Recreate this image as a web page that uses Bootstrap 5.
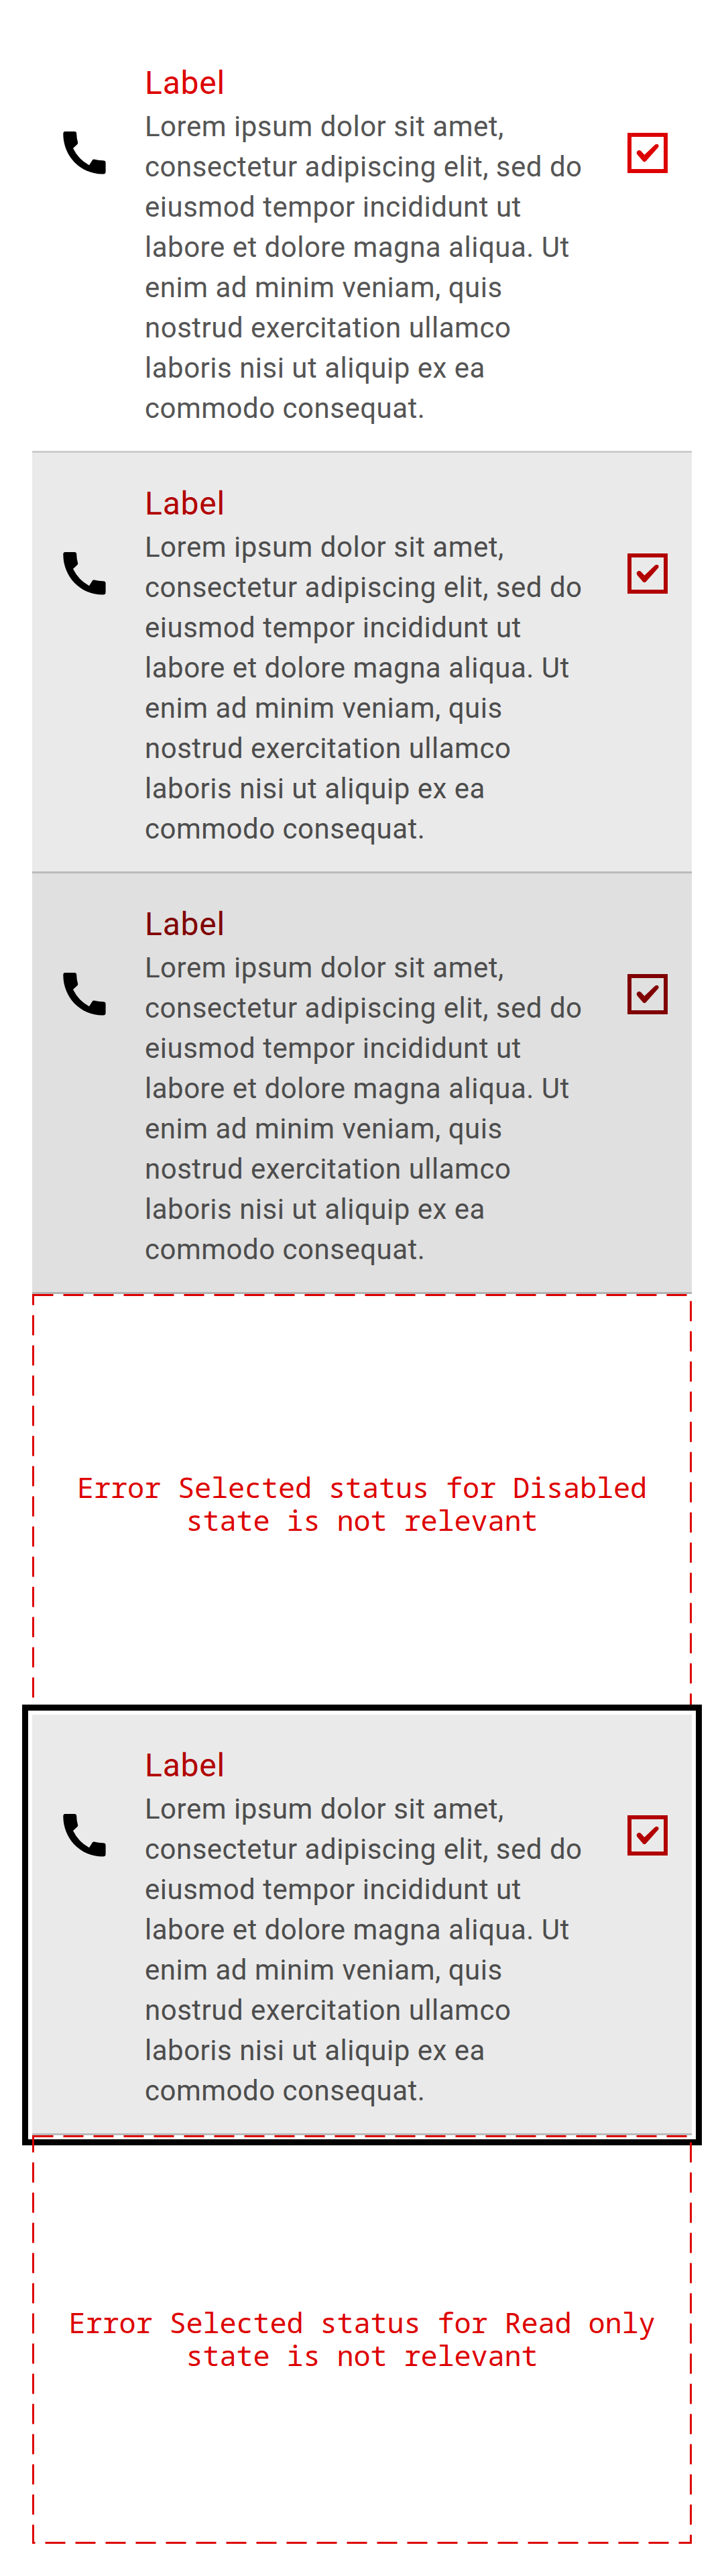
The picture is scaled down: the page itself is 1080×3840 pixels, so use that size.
<!DOCTYPE html>
<html lang="en">
<head>
<meta charset="utf-8">
<meta name="viewport" content="width=device-width, initial-scale=1">
<title>List item – error selected states</title>
<link href="https://cdn.jsdelivr.net/npm/bootstrap@5.3.0/dist/css/bootstrap.min.css" rel="stylesheet">
<style>
body { background: #fff; font-family: Roboto, sans-serif; --err: #d00; }
.states { width: 1080px; padding: 48px; }
.state-item { height: 627px; padding: 40px 36px 0 30px; border-bottom: 3px solid #ccc; }
.state-item .call-icon { width: 96px; height: 96px; margin-top: 92px; flex: none; }
.item-copy { width: 666px; margin-left: 42px; flex: none; }
.item-label { font-size: 48px; line-height: 71px; letter-spacing: .8px; color: var(--err); margin: 0; font-weight: 400; }
.item-text { font-size: 42px; line-height: 60px; letter-spacing: .5px; color: #555; margin: 0; }
.check-box { width: 60px; height: 60px; margin-top: 110px; color: var(--err); flex: none; }
.is-hover { --err: #b20000; background: #eaeaea; border-color: #bbb; }
.is-hover .item-text, .is-pressed .item-text { color: #4d4d4d; }
.is-pressed { --err: #800000; background: #e0e0e0; border-color: #b3b3b3; }
.is-focus { box-shadow: 0 0 0 6px #fff, 0 0 0 15px #000; }
.state-note { height: 627px; padding-bottom: 4px; color: #d00; }
.state-note.last-note { height: 609px; }
.state-note p { font: 42px/49px "Droid Sans Mono", "Noto Sans Mono", "DejaVu Sans Mono", monospace; letter-spacing: -.2px; margin: 0; }
</style>
<script src="https://cdn.jsdelivr.net/npm/bootstrap@5.3.0/dist/js/bootstrap.bundle.min.js"></script>
</head>
<body>
<svg class="d-none">
  <symbol id="call" viewBox="0 0 96 96"><path d="M19 16H33q3.200 0 3.200 3 0 7 2 13.500.3 1.500-1 2.700L31 41q8 16.500 24 25.300l4.600-7.300q1.200-1.800 3-1.400 6 1.600 13 1.600 4 0 4 3.300V76q0 3.500-4 3.500C41 79.500 16.300 52 16.300 19.500Q16.300 16 19 16z"/></symbol>
  <symbol id="check" viewBox="0 0 60 60"><path d="M3 3h54v54H3z" fill="none" stroke="currentColor" stroke-width="6"/><path d="M14.700 27.300Q17.300 24.800 20.300 27.200L25.300 32.700L41.300 17.400Q43.800 15.900 45.900 17.500Q47.300 19.400 45.800 21.800L27.500 42.200Q25.300 44.200 23.100 42.200L14.500 32.200Q12.700 29.600 14.700 27.300z" fill="currentColor"/></symbol>
</svg>
<main class="states d-flex flex-column">
  <section class="state-item d-flex align-items-start">
    <svg class="call-icon"><use href="#call"/></svg>
    <div class="item-copy"><h2 class="item-label">Label</h2><p class="item-text">Lorem ipsum dolor sit amet, consectetur adipiscing elit, sed do eiusmod tempor incididunt ut labore et dolore magna aliqua. Ut enim ad minim veniam, quis nostrud exercitation ullamco laboris nisi ut aliquip ex ea commodo consequat.</p></div>
    <svg class="check-box ms-auto"><use href="#check"/></svg>
  </section>
  <section class="state-item is-hover d-flex align-items-start">
    <svg class="call-icon"><use href="#call"/></svg>
    <div class="item-copy"><h2 class="item-label">Label</h2><p class="item-text">Lorem ipsum dolor sit amet, consectetur adipiscing elit, sed do eiusmod tempor incididunt ut labore et dolore magna aliqua. Ut enim ad minim veniam, quis nostrud exercitation ullamco laboris nisi ut aliquip ex ea commodo consequat.</p></div>
    <svg class="check-box ms-auto"><use href="#check"/></svg>
  </section>
  <section class="state-item is-pressed d-flex align-items-start">
    <svg class="call-icon"><use href="#call"/></svg>
    <div class="item-copy"><h2 class="item-label">Label</h2><p class="item-text">Lorem ipsum dolor sit amet, consectetur adipiscing elit, sed do eiusmod tempor incididunt ut labore et dolore magna aliqua. Ut enim ad minim veniam, quis nostrud exercitation ullamco laboris nisi ut aliquip ex ea commodo consequat.</p></div>
    <svg class="check-box ms-auto"><use href="#check"/></svg>
  </section>
  <section class="state-note position-relative d-flex align-items-center justify-content-center text-center">
    <svg class="position-absolute top-0 start-0 w-100 h-100"><rect x="1.5" y="1.5" width="981" height="624" fill="none" stroke="#d00" stroke-width="3" stroke-dasharray="30 15"/></svg>
    <p>Error Selected status for Disabled<br>state is not relevant</p>
  </section>
  <section class="state-item is-hover is-focus position-relative d-flex align-items-start">
    <svg class="call-icon"><use href="#call"/></svg>
    <div class="item-copy"><h2 class="item-label">Label</h2><p class="item-text">Lorem ipsum dolor sit amet, consectetur adipiscing elit, sed do eiusmod tempor incididunt ut labore et dolore magna aliqua. Ut enim ad minim veniam, quis nostrud exercitation ullamco laboris nisi ut aliquip ex ea commodo consequat.</p></div>
    <svg class="check-box ms-auto"><use href="#check"/></svg>
  </section>
  <section class="state-note last-note position-relative d-flex align-items-center justify-content-center text-center">
    <svg class="position-absolute top-0 start-0 w-100 h-100"><rect x="1.5" y="1.5" width="981" height="606" fill="none" stroke="#d00" stroke-width="3" stroke-dasharray="30 15"/></svg>
    <p>Error Selected status for Read only<br>state is not relevant</p>
  </section>
</main>
</body>
</html>
